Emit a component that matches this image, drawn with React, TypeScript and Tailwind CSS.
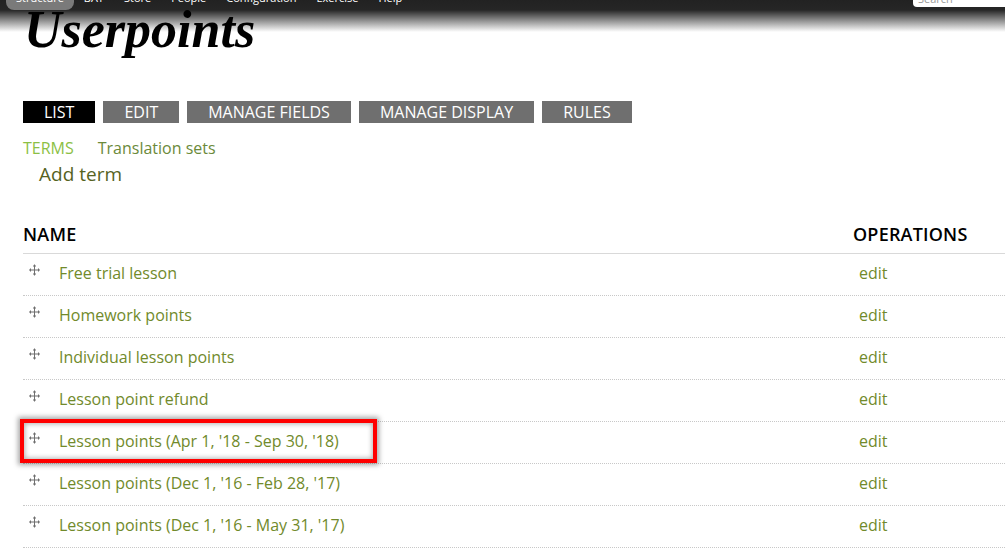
import React from "react";

const navItems = ["BAT", "Store", "People", "Configuration", "Exercise", "Help"];
const tabs = ["LIST", "EDIT", "MANAGE FIELDS", "MANAGE DISPLAY", "RULES"];
const terms = [
  "Free trial lesson",
  "Homework points",
  "Individual lesson points",
  "Lesson point refund",
  "Lesson points (Apr 1, '18 - Sep 30, '18)",
  "Lesson points (Dec 1, '16 - Feb 28, '17)",
  "Lesson points (Dec 1, '16 - May 31, '17)",
];

function DragHandle() {
  return (
    <svg width="11" height="12" viewBox="0 0 11 12" className="shrink-0 text-[#6f6f6f]">
      <g fill="currentColor">
        <rect x="5" y="0.5" width="1" height="11" />
        <rect x="0" y="5.5" width="11" height="1" />
        <rect x="4" y="1.5" width="3" height="1" />
        <rect x="4" y="9.5" width="3" height="1" />
        <rect x="1" y="4.5" width="1" height="3" />
        <rect x="9" y="4.5" width="1" height="3" />
      </g>
    </svg>
  );
}

export default function App() {
  return (
    <div
      className="min-h-[557px] overflow-hidden bg-[linear-gradient(to_bottom,#222_0px,#262626_10px,#8a8a8a_20px,#fff_32px)]"
      style={{ fontFamily: '"Open Sans", "Liberation Sans", sans-serif' }}
    >
      {/* Toolbar */}
      <div className="relative flex h-[10px] items-end overflow-hidden">
        <div className="ml-[6px] flex h-[20px] items-end rounded-[8px] bg-[#7a7a7a] px-[10px] pb-[6px] text-[11px] leading-[12px] text-white">
          Structure
        </div>
        <div className="ml-[10px] flex items-end gap-[20px] pb-[6px] text-[11px] leading-[12px] text-white">
          {navItems.map((n) => (
            <span key={n}>{n}</span>
          ))}
        </div>
        <div className="absolute right-0 top-0 h-[7px] w-[92px] overflow-hidden rounded-bl-[4px] bg-white">
          <span className="absolute left-[5px] top-[-7px] text-[11px] leading-[12px] text-[#999]">Search</span>
        </div>
      </div>

      <h1
        className="ml-[24px] text-[52px] font-bold italic leading-[40px] text-black"
        style={{ fontFamily: '"Liberation Serif", "DejaVu Serif", serif' }}
      >
        Userpoints
      </h1>

      <div className="pl-[23px]">
        {/* Primary tabs */}
        <div className="mt-[51px] flex gap-[8px]">
          {tabs.map((t, i) => (
            <div
              key={t}
              className={
                i === 0
                  ? "h-[22px] bg-black px-[21px] text-[16px] leading-[22px] text-white"
                  : "h-[22px] bg-[#6f6f6f] px-[21px] text-[16px] leading-[22px] text-white"
              }
            >
              {t}
            </div>
          ))}
        </div>

        {/* Secondary tabs */}
        <div className="mt-[14px] flex gap-[24px] text-[16px] leading-[22px]">
          <span className="text-[#8cbf45]">TERMS</span>
          <span className="text-[#6b8a3a]">Translation sets</span>
        </div>
        <div className="ml-[16px] mt-[3px] text-[19px] leading-[24px] text-[#56631f]">Add term</div>

        {/* Table */}
        <div className="mt-[36px] w-[1010px]">
          <div className="grid grid-cols-[830px_1fr] border-b border-[#d9d9d9] pb-[7px] text-[18px] font-semibold leading-[24px] tracking-[0.2px] text-black">
            <span>NAME</span>
            <span>OPERATIONS</span>
          </div>
          {terms.map((t, i) => (
            <div
              key={t}
              className="relative grid h-[42px] grid-cols-[830px_1fr] items-center border-b border-dotted border-[#c8c8c8] pb-[4px] text-[16px] text-[#718a2b]"
            >
              <div className="flex items-center gap-[19px] pl-[6px]">
                <span className="-mt-[6px]">
                  <DragHandle />
                </span>
                <span>{t}</span>
              </div>
              <span className="pl-[6px]">edit</span>
              {i === 4 && (
                <div className="absolute left-[-3px] top-[-3px] h-[44px] w-[357px] border-[4px] border-[#ff0000] shadow-[0_0_5px_2px_rgba(0,0,0,0.35),inset_0_0_5px_1px_rgba(0,0,0,0.3)]" />
              )}
            </div>
          ))}
        </div>
      </div>
    </div>
  );
}
